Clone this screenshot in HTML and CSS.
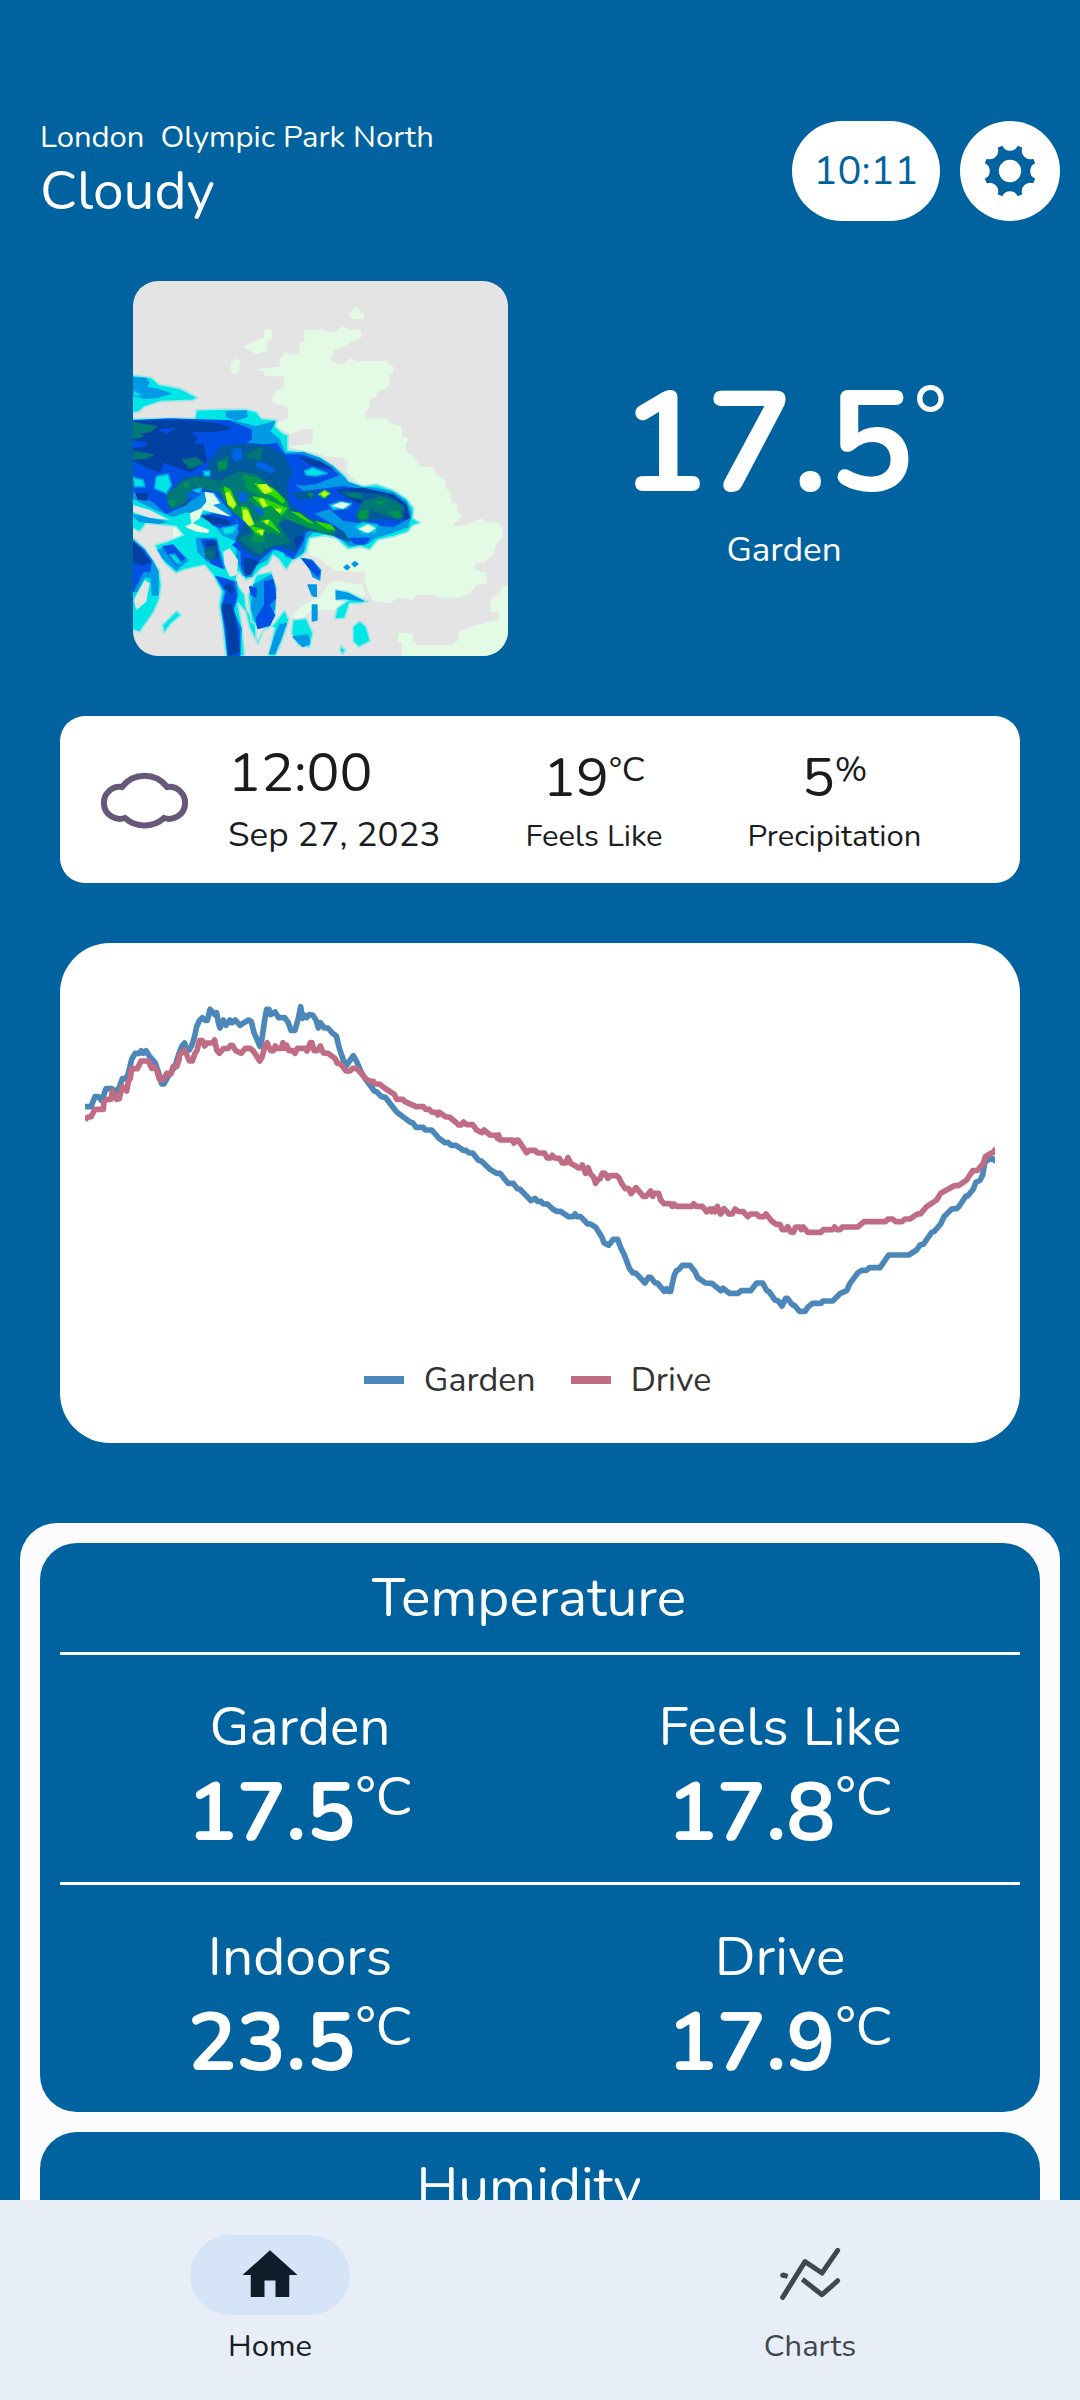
FILE: index.html
```html
<!DOCTYPE html>
<html lang="en">
<head>
<meta charset="utf-8">
<meta name="viewport" content="width=device-width, initial-scale=1">
<title>Weather</title>
<link rel="stylesheet" href="styles.css">
</head>
<body>
<div class="app">
<main class="content">
  <header class="header">
    <div class="place">
      <p class="place-name">London&nbsp; Olympic Park North</p>
      <h1 class="condition">Cloudy</h1>
    </div>
    <button class="pill-button" type="button">10:11</button>
    <button class="round-button" type="button" aria-label="Settings">
      <svg class="gear" viewBox="-80 -80 160 160" aria-hidden="true">
        <path fill-rule="evenodd" d="M22.8-74.6L36.6-68.9A25 25 0 0 0 68.9-36.6L74.6-22.8A25 25 0 0 0 74.6 22.8L68.9 36.6A25 25 0 0 0 36.6 68.9L22.8 74.6A25 25 0 0 0-22.8 74.6L-36.6 68.9A25 25 0 0 0-68.9 36.6L-74.6 22.8A25 25 0 0 0-74.6-22.8L-68.9-36.6A25 25 0 0 0-36.6-68.9L-22.8-74.6A25 25 0 0 0 22.8-74.6ZM33 0A33 33 0 1 0-33 0A33 33 0 1 0 33 0Z"/>
      </svg>
    </button>
  </header>

  <section class="hero">
    <svg class="radar" viewBox="10 18 1125 1125" role="img" aria-label="Rain radar">
      <rect x="10" y="18" width="1125" height="1125" fill="#e4e4e4"/>
      <g fill="#e3fbe4">
        <path d="M524 165L583 163 592 171 616 171 640 154 655 163 692 165 696 187 680 191 662 204 635 220 610 224 608 245 598 255 628 266 645 266 662 250 680 258 765 258 792 275 790 292 780 300 780 330 765 343 745 347 738 370 722 368 718 400 706 412 712 430 765 430 790 448 815 452 817 485 838 492 828 505 830 530 855 545 870 575 912 577 920 598 945 615 950 640 963 655 965 685 985 685 980 708 998 718 990 732 965 754 1000 753 1025 740 1055 731 1075 740 1108 745 1118 765 1118 785 1100 808 1090 840 1065 862 1038 865 1035 885 1070 893 1070 925 1040 930 1020 955 990 968 930 968 915 960 865 960 848 976 820 968 795 972 785 985 730 978 705 925 705 892 620 888 590 870 570 850 540 840 530 800 570 780 700 800 700 640 650 590 655 560 640 547 600 547 560 535 475 515 548 505 550 463 520 462 485 478 430 450 475 430 475 395 432 385 428 372 440 345 462 340 462 305 405 303 403 290 380 282 450 275 450 250 468 230 480 240 510 235 510 205 524 200Z"/>
        <path d="M680 95L705 120 700 133 668 131 658 118ZM405 163L425 163 428 190 414 198 412 228 380 238 342 215 380 195 402 190ZM322 250L330 260 328 288 320 298 305 292 303 265ZM598 925L620 918 700 930 706 960 650 1005 545 1005 520 1030 480 1028 520 990 570 965ZM1135 930L1118 935 1110 958 1085 970 1082 1010 1108 1012 1105 1035 1020 1055 1018 1062 988 1068 985 1095 970 1110 865 1110 850 1098 850 1075 805 1075 805 1098 817 1103 817 1143 1135 1143ZM130 755L330 650 340 800 240 860 180 870 130 830Z"/>
      </g>
      <g fill="#00e6e6" stroke="#99e6e6" stroke-width="5" stroke-linejoin="round">
        <path d="M5 300L65 307 88 328 150 340 205 368 190 376 90 380 45 395 28 410 5 415Z"/>
        <path d="M5 432L100 428 195 430 200 405 290 402 350 403 380 410 395 430 440 435 438 455 460 475 475 480 475 525 520 530 570 545 615 575 645 600 660 620 700 633 740 628 790 645 830 670 852 700 850 730 872 743 848 752 835 770 790 785 745 795 720 824 690 815 655 822 620 790 585 782 540 790 530 830 515 845 488 858 470 885 445 850 430 840 415 870 395 880 372 905 350 915 325 890 318 920 345 960 350 1000 378 1050 380 1100 400 1070 435 1045 465 1005 478 1035 460 1090 438 1143 415 1143 435 1060 415 1045 400 1070 385 1108 360 1060 348 1010 325 985 335 1040 345 1143 288 1143 278 1050 268 990 275 950 250 900 225 870 160 885 140 895 105 865 85 830 75 810 110 800 160 780 140 755 50 745 30 770 5 758Z"/>
        <path d="M5 785L45 818 70 858 88 885 95 930 88 975 70 1015 30 1072 5 1062ZM140 1008L155 1020 125 1045 103 1075 98 1050ZM617 945L655 950 715 980 690 985 660 985 645 1030 615 1032 622 1000 655 975 620 975ZM690 1038L710 1055 722 1098 688 1117 670 1100 670 1055ZM633 1112L648 1125 640 1138 630 1128ZM485 1075L490 1035 530 1030 550 1075 540 1118 505 1110ZM380 900L425 890 440 940 435 1030 400 1060 365 1040 355 960Z"/>
      </g>
      <g fill="#0099e6" stroke="#0099e6" stroke-width="4" stroke-linejoin="round">
        <path d="M10 308L50 310 58 322 50 338 80 342 122 356 80 368 40 370 10 352ZM290 410L350 408 352 425 320 435 290 425ZM10 436L300 436 380 455 435 440 420 470 450 495 465 535 520 532 570 550 610 575 640 605 655 622 700 638 740 640 790 652 830 680 845 715 835 755 780 775 735 788 715 805 660 812 620 780 550 770 530 790 520 830 495 850 470 845 455 820 430 825 410 855 380 870 365 905 340 900 320 850 325 800 280 780 245 735 210 720 170 710 130 725 70 700 10 670Z"/>
        <path d="M10 795L45 825 70 860 85 890 85 960 68 960 65 910 45 905 20 950 10 950ZM60 635L130 620 120 650 80 655ZM200 790L260 790 285 880 235 860 205 830ZM85 825L125 810 175 855 140 885 100 850ZM258 905L320 920 325 960 310 1010 335 1060 330 1143 295 1143 285 1060 275 1000 285 950ZM372 930L425 900 438 940 435 1000 420 1050 385 1060 365 1000ZM450 1050L470 1045 450 1100 435 1135 420 1135 435 1085ZM490 1085L535 1080 540 1105 520 1115ZM515 850L545 855 573 885 570 915 550 905 540 880ZM535 930L560 930 560 965 548 962ZM548 990L562 990 562 1035 548 1038ZM620 948L655 955 700 978 640 970 620 972ZM675 860L685 867 675 875 667 867ZM652 870L660 877 652 884 643 877ZM10 720L80 735 110 740 90 745 30 740Z"/>
      </g>
      <g fill="#0050e6" stroke="#0050e6" stroke-width="4" stroke-linejoin="round">
        <path d="M10 438L120 432 300 438 365 465 365 492 345 505 410 510 440 505 465 540 520 540 570 560 605 580 625 600 560 625 520 630 490 625 520 650 640 635 740 650 790 660 825 685 835 730 790 755 700 745 640 735 600 700 550 715 625 760 650 795 630 790 590 768 530 760 520 800 490 850 460 830 430 820 390 855 350 905 335 870 335 830 310 810 330 790 325 740 300 705 255 650 215 650 165 690 110 715 70 680 10 650Z"/>
        <path d="M10 800L40 825 65 860 60 890 40 890 10 950ZM100 815L130 810 165 850 140 870 120 845ZM215 795L255 795 280 880 245 865ZM220 715L310 725 320 745 290 765 250 750ZM262 905L312 920 320 965 310 1000 328 1060 330 1143 295 1143 288 1060 278 1000 290 950ZM405 920L430 915 438 970 418 990 435 1020 420 1050 385 1060 380 1030 405 990ZM520 852L550 860 570 890 565 905 540 880ZM660 790L720 790 705 808 675 806ZM360 935L380 940 378 965 365 960Z"/>
      </g>
      <g fill="#0040a0" stroke="#0040a0" stroke-width="4" stroke-linejoin="round">
        <path d="M10 440L150 438 260 445 305 460 260 468 180 470 200 490 190 505 220 510 230 560 180 590 100 560 90 590 60 580 10 555 10 520 50 515 50 500 10 495ZM515 548L570 560 605 580 540 568ZM10 800L35 825 60 860 40 870 10 860ZM210 720L290 735 300 750 250 745ZM230 800L260 800 265 850 235 850ZM300 925L312 945 305 955 285 935ZM278 988L305 990 320 1060 328 1130 300 1140 292 1060ZM20 655L55 655 50 675 25 672ZM440 730L490 740 520 790 500 820 470 810 440 790ZM345 850L385 860 360 900 345 890ZM625 645L700 640 790 660 830 690 840 730 800 735 740 710 640 660Z"/>
      </g>
      <path fill="#0050e6" d="M12 500L50 500 50 514 12 520ZM85 462L140 458 110 478ZM130 575L175 592 150 612 120 600Z"/>
      <g fill="#005a9c" stroke="#005a9c" stroke-width="4" stroke-linejoin="round">
        <path d="M275 515L330 508 420 515 460 540 485 590 470 630 480 690 540 730 600 750 640 770 660 800 620 780 540 765 490 790 500 830 440 810 380 850 340 820 320 790 350 740 300 690 260 640 180 640 170 690 115 700 120 655 160 610 230 600 240 560Z"/>
        <path d="M640 648L710 655 770 660 825 695 820 735 770 730 680 740 690 705 740 690 690 670 640 660ZM490 655L550 648 555 670 510 672ZM225 815L260 815 258 855 230 850Z"/>
      </g>
      <g fill="#007878" stroke="#007878" stroke-width="4" stroke-linejoin="round">
        <path d="M10 442L80 455 60 470 30 475 40 485 10 490ZM15 530L70 540 45 550 10 552ZM160 555L200 548 220 565 180 580ZM365 530L395 520 390 555 350 545ZM265 560L295 545 290 585 265 585ZM110 660L160 620 200 605 270 620 330 590 380 600 430 640 475 680 485 720 560 740 620 765 610 780 540 760 480 730 440 740 480 800 400 820 395 840 350 810 330 790 370 775 340 730 300 700 270 650 190 635 170 680 125 700Z"/>
        <path d="M700 680L750 665 800 680 820 700 810 730 770 720 720 700 715 735 690 735 680 720ZM650 655L690 655 700 670 670 668ZM225 830L250 830 245 850Z"/>
      </g>
      <g fill="#009650" stroke="#009650" stroke-width="3" stroke-linejoin="round">
        <path d="M340 600L385 610 430 650 470 680 480 715 610 765 600 775 530 755 460 725 440 755 455 780 400 765 405 800 365 800 380 760 335 730 300 700 270 640 300 640 330 700 360 740 400 740 380 690 350 670 400 670 350 640ZM160 625L180 625 172 640ZM690 710L715 705 710 730 690 732ZM780 710L805 708 818 725 795 728ZM735 680L768 678 755 690ZM535 655L550 655 545 668ZM115 680L140 678 130 695ZM265 565L290 560 285 580 270 582Z"/>
      </g>
      <g fill="#30d800" stroke="#30d800" stroke-width="3" stroke-linejoin="round">
        <path d="M283 635L302 645 320 690 312 702 296 690ZM335 695L355 700 372 745 360 752 340 735ZM375 625L430 640 465 675 460 685 425 660 395 652ZM370 665L400 670 470 700 455 718 425 690 400 698ZM485 710L510 715 550 745 535 740ZM560 740L605 750 615 765 590 760ZM565 658L585 645 602 655 585 670ZM395 738L420 735 450 772 425 755ZM360 752L405 765 398 783 375 772ZM430 695L472 700 455 720Z"/>
      </g>
      <g fill="#c4ff20" stroke="#c4ff20" stroke-width="3" stroke-linejoin="round">
        <path d="M288 655L298 652 318 688 310 698 296 688ZM340 705L352 705 372 748 358 752 342 732ZM385 630L410 628 428 648 405 656ZM388 672L400 672 412 692 400 695ZM574 657L585 650 596 656 583 664ZM438 703L455 702 450 713ZM405 738L418 735 412 748ZM382 768L400 765 398 780Z"/>
      </g>
      <g fill="#00e6e6" stroke="#00b0e6" stroke-width="5" stroke-linejoin="round">
        <path d="M525 588L550 578 592 595 560 603 530 600ZM10 608L40 615 45 635 15 635ZM80 605L115 598 125 630 110 655 75 640ZM222 590L240 588 240 602 225 602ZM675 755L700 742 745 750 738 772 700 778ZM600 690L630 680 665 685 650 700 610 703ZM190 645L215 640 210 655ZM120 840L135 838 155 865 140 865ZM195 710L230 690 250 712 215 720ZM275 760L325 750 310 775 285 780ZM10 345L38 358 20 365 10 360Z"/>
      </g>
      <g fill="#0064e6">
        <path d="M310 520L335 520 338 550 318 562 305 545ZM375 565L400 560 440 585 425 595 385 580ZM325 650L350 655 355 680 330 680ZM370 690L400 705 405 725 380 710ZM165 655L220 655 190 675Z"/>
        <path fill="#e3fbe4" d="M605 692L635 681 662 687 640 702ZM685 762L715 747 738 760 715 775ZM225 650L250 655 272 685 250 690 305 725 280 720 220 705 210 730 190 745 240 765 235 775 200 770 165 755 185 745 180 715 215 700 230 680Z"/>
        <path fill="#e4e4e4" d="M280 830L300 820 325 855 322 900 300 905 285 870ZM12 975L45 915 60 925 50 980 20 1005ZM10 690L60 705 120 735 60 728 10 712ZM40 400L120 382 200 392 195 425 45 428Z"/>
      </g>
    </svg>
    <div class="now">
      <p class="now-value"><strong>17.5</strong><span class="now-unit">°</span></p>
      <p class="now-label">Garden</p>
    </div>
  </section>

  <section class="forecast">
    <svg class="cloud" viewBox="99 772 90 58" aria-hidden="true">
      <path d="M121 787A28 28 0 0 1 166 787A16 16 0 1 1 163 818A29 29 0 0 1 124 818A16 16 0 1 1 121 787Z"/>
    </svg>
    <div class="when">
      <p class="when-time">12:00</p>
      <p class="when-date">Sep 27, 2023</p>
    </div>
    <div class="stat">
      <p class="stat-value">19<span class="stat-unit">°C</span></p>
      <p class="stat-label">Feels Like</p>
    </div>
    <div class="stat">
      <p class="stat-value">5<span class="stat-unit">%</span></p>
      <p class="stat-label">Precipitation</p>
    </div>
  </section>

  <section class="chart">
    <svg class="plot" viewBox="75 0 2730 1110" role="img" aria-label="Garden and drive temperature">
      <polyline class="line garden" points="75,410 93,410 105,380 115,380 125,392 138,356 155,356 168,365 178,352 187,326 198,326 205,310 215,268 226,250 238,250 244,242 250,250 258,242 268,258 285,278 295,305 305,342 312,342 325,318 345,290 357,250 366,228 374,219 380,238 388,240 396,225 404,198 410,170 418,152 427,143 435,151 442,151 450,118 458,126 464,134 470,128 475,158 480,174 490,150 498,166 510,150 516,158 526,150 540,166 552,158 566,150 574,155 582,188 600,229 606,205 614,150 620,118 627,118 632,134 645,126 656,143 674,143 685,158 693,181 705,181 715,145 722,110 727,145 733,135 740,143 748,134 758,135 768,150 775,174 781,158 793,174 804,174 818,190 829,198 838,235 850,270 859,287 880,257 890,275 903,305 915,325 943,363 950,365 964,380 976,382 1010,426 1030,441 1050,456 1058,458 1068,472 1090,472 1096,480 1115,480 1135,503 1155,518 1165,518 1174,526 1188,526 1210,541 1218,541 1227,549 1238,549 1255,571 1264,573 1290,598 1310,610 1320,610 1344,640 1360,640 1372,656 1380,658 1413,692 1425,685 1432,694 1442,694 1450,702 1462,702 1478,717 1490,724 1502,724 1525,740 1540,740 1545,732 1552,740 1562,740 1583,762 1592,762 1608,773 1625,800 1632,818 1646,826 1660,808 1673,808 1683,835 1692,852 1708,895 1718,908 1728,910 1755,939 1765,922 1773,923 1785,938 1793,940 1813,964 1820,956 1824,964 1832,964 1837,940 1843,915 1850,901 1856,899 1867,886 1890,886 1905,905 1913,923 1936,939 1955,940 1983,962 1989,955 2008,970 2035,970 2043,962 2072,962 2090,939 2108,939 2120,961 2128,966 2145,990 2155,993 2166,1008 2177,985 2182,985 2195,1002 2205,1008 2218,1024 2235,1024 2245,1010 2258,1000 2283,1000 2289,993 2318,993 2340,971 2360,962 2370,940 2393,909 2405,901 2420,901 2428,893 2460,893 2486,855 2546,855 2570,840 2580,825 2590,823 2615,787 2623,784 2642,762 2652,740 2675,717 2690,716 2698,708 2718,678 2723,678 2740,657 2748,636 2760,631 2768,615 2774,580 2782,570 2798,566 2808,575"/>
      <polyline class="line drive" points="75,450 83,442 93,440 105,418 130,418 132,395 140,388 153,388 157,363 163,378 170,388 178,386 186,350 200,363 205,335 211,325 215,296 232,296 243,273 265,273 275,295 282,290 290,300 298,328 310,328 320,310 333,312 340,288 350,290 357,270 358,255 374,240 388,273 397,273 405,250 411,242 418,212 427,212 434,228 440,219 458,219 464,210 470,240 478,250 490,236 505,235 512,226 518,227 527,242 543,250 556,235 570,235 580,243 599,273 606,262 615,228 621,218 632,242 640,242 646,228 652,235 664,235 669,218 675,235 680,226 687,242 698,242 705,250 712,235 735,235 741,243 751,218 756,218 762,242 773,242 781,228 790,249 804,250 826,266 832,280 842,282 858,303 870,303 878,295 890,295 918,327 930,334 940,334 945,342 958,342 978,357 1003,373 1010,388 1028,388 1035,395 1068,410 1090,410 1097,418 1108,418 1115,426 1130,428 1133,435 1138,427 1158,441 1168,441 1190,459 1195,465 1203,465 1211,456 1220,464 1238,464 1250,480 1266,488 1272,480 1290,495 1308,496 1312,505 1316,495 1320,510 1357,510 1362,519 1370,510 1375,511 1400,548 1408,541 1425,541 1432,549 1453,549 1462,564 1472,564 1477,556 1484,564 1498,565 1507,579 1517,579 1524,563 1532,580 1545,587 1555,594 1562,593 1567,585 1577,610 1584,593 1592,612 1600,620 1607,640 1615,627 1620,627 1627,609 1635,610 1644,625 1650,617 1670,617 1678,625 1685,640 1696,656 1706,656 1713,671 1728,653 1750,679 1758,679 1772,663 1778,679 1782,670 1796,670 1802,690 1812,701 1830,701 1837,709 1842,702 1850,709 1896,709 1901,701 1908,709 1927,709 1940,725 1950,717 1955,725 1960,717 1965,725 1972,709 1982,732 1992,716 2007,732 2017,732 2025,717 2035,724 2050,725 2063,740 2072,732 2090,732 2098,740 2112,740 2118,732 2135,753 2148,763 2160,763 2167,779 2177,779 2183,770 2192,786 2200,787 2207,771 2220,771 2224,779 2230,771 2243,787 2283,787 2290,779 2318,779 2324,771 2330,779 2340,779 2347,771 2393,771 2412,755 2476,755 2484,747 2498,747 2507,755 2526,755 2535,747 2550,747 2570,733 2582,731 2600,710 2630,690 2642,670 2683,647 2695,647 2720,630 2738,602 2753,601 2770,580 2776,560 2790,551 2800,547 2808,535"/>
    </svg>
    <ul class="legend">
      <li class="legend-item"><span class="swatch swatch-garden"></span>Garden</li>
      <li class="legend-item"><span class="swatch swatch-drive"></span>Drive</li>
    </ul>
  </section>

  <div class="panel">
    <section class="group">
      <h2 class="group-title">Temperature</h2>
      <div class="readings">
        <div class="reading"><p class="reading-label">Garden</p><p class="reading-value"><strong>17.5</strong><span class="reading-unit">°C</span></p></div>
        <div class="reading"><p class="reading-label">Feels Like</p><p class="reading-value"><strong>17.8</strong><span class="reading-unit">°C</span></p></div>
      </div>
      <div class="readings">
        <div class="reading"><p class="reading-label">Indoors</p><p class="reading-value"><strong>23.5</strong><span class="reading-unit">°C</span></p></div>
        <div class="reading"><p class="reading-label">Drive</p><p class="reading-value"><strong>17.9</strong><span class="reading-unit">°C</span></p></div>
      </div>
    </section>
    <section class="group">
      <h2 class="group-title">Humidity</h2>
    </section>
  </div>
</main>

<nav class="nav">
  <a class="nav-item active" href="#home">
    <span class="nav-icon"><svg viewBox="0 0 24 24" width="66" height="66" aria-hidden="true"><path fill="currentColor" d="M10 20v-6h4v6h5v-8h3L12 3 2 12h3v8z"/></svg></span>
    Home
  </a>
  <a class="nav-item" href="#charts">
    <span class="nav-icon"><svg viewBox="0 0 270 240" width="90" height="80" fill="none" stroke="currentColor" stroke-width="15" aria-hidden="true"><path stroke-linecap="round" stroke-linejoin="round" d="M53 187L120 80 171 114 218 46"/><path stroke-linejoin="round" d="M112 133L171 179 214 141"/><path stroke-linecap="round" d="M214 141L218 137M53 121L57 121"/><path d="M53 120L68 124"/></svg></span>
    Charts
  </a>
</nav>
</div>
</body>
</html>
```
FILE: styles.css
```css
* {
  box-sizing: border-box;
}

body,
h1,
h2,
p,
ul {
  margin: 0;
  padding: 0;
  font-weight: 400;
}

body {
  background: #0063a0;
  color: #fff;
  font-family: Nunito, Lato, "Open Sans", sans-serif;
}

button {
  border: 0;
  padding: 0;
  background: #fff;
  color: #0063a0;
  font: inherit;
}

.app {
  display: flex;
  flex-direction: column;
  height: 100vh;
}

.content {
  flex: 1;
  min-height: 0;
  overflow-y: auto;
  scrollbar-width: none;
}

/* Header */

.header {
  display: flex;
  gap: 20px;
  padding: 121px 20px 0 40px;
}

.place {
  flex: 1;
}

.place-name {
  margin-bottom: 6px;
  font-size: 31px;
  line-height: 32px;
}

.condition {
  font-size: 55px;
  line-height: 64px;
}

.pill-button {
  width: 148px;
  height: 100px;
  border-radius: 50px;
  font-size: 40px;
}

.round-button {
  display: grid;
  place-items: center;
  width: 100px;
  height: 100px;
  border-radius: 50%;
}

.gear {
  width: 54px;
  height: 54px;
  fill: currentColor;
}

/* Radar and current temperature */

.hero {
  display: grid;
  grid-template-columns: 1fr 1fr;
  place-items: center;
  margin-top: 58px;
  padding: 0 64px 0 88px;
}

.radar {
  width: 375px;
  height: 375px;
  border-radius: 25px;
}

.now {
  text-align: center;
}

.now-value {
  display: flex;
  font-size: 143px;
  line-height: 162px;
}

.now-unit {
  font-size: 90px;
  line-height: 116px;
}

.now-label {
  font-size: 35px;
  line-height: 50px;
}

/* Forecast card */

.forecast {
  display: flex;
  align-items: center;
  gap: 85px;
  min-height: 167px;
  margin: 60px 60px 0;
  padding: 7px 40px 0;
  border-radius: 25px;
  background: #fff;
  color: #1a1c1e;
}

.cloud {
  width: 90px;
  height: 58px;
  margin: 0 -47px 4px 0;
  fill: none;
  stroke: #67587a;
  stroke-width: 6px;
}

.when-time {
  font-size: 55px;
  line-height: 64px;
}

.when-date {
  font-size: 35px;
  line-height: 60px;
}

.stat {
  text-align: center;
}

.stat-value {
  display: flex;
  justify-content: center;
  font-size: 55px;
  line-height: 66px;
}

.stat-unit {
  font-size: 35px;
  line-height: 50px;
}

.stat-label {
  font-size: 31px;
  line-height: 50px;
}

/* Chart card */

.chart {
  margin: 60px 60px 0;
  padding: 27px 25px 43px;
  border-radius: 50px;
  background: #fff;
}

.plot {
  display: block;
  width: 100%;
}

.line {
  fill: none;
  stroke-width: 17px;
  stroke-linejoin: round;
}

.garden {
  stroke: #4b87b9;
}

.drive {
  stroke: #c06c84;
}

.legend {
  display: flex;
  justify-content: center;
  gap: 35px;
  margin-top: 20px;
  padding-right: 5px;
  color: #333;
  font-size: 34px;
  line-height: 40px;
  list-style: none;
}

.legend-item {
  display: flex;
  align-items: center;
  gap: 20px;
}

.swatch {
  width: 40px;
  height: 8px;
}

.swatch-garden {
  background: #4b87b9;
}

.swatch-drive {
  background: #c06c84;
}

/* Readings */

.panel {
  display: grid;
  gap: 20px;
  margin: 80px 20px 0;
  padding: 20px;
  border-radius: 37px;
  background: #fcfcff;
}

.group {
  padding: 0 20px;
  border-radius: 37px;
  background: #0063a0;
}

.group-title {
  padding-right: 22px;
  font-size: 55px;
  line-height: 109px;
  text-align: center;
}

.readings {
  display: grid;
  grid-template-columns: 1fr 1fr;
  padding: 40px 0 15px;
  border-top: 3px solid #fff;
}

.reading {
  text-align: center;
}

.reading-label {
  font-size: 55px;
  line-height: 64px;
}

.reading-value {
  display: flex;
  justify-content: center;
  font-size: 82px;
  line-height: 108px;
}

.reading-unit {
  font-size: 55px;
  line-height: 76px;
}

/* Bottom navigation */

.nav {
  display: flex;
  min-height: 200px;
  padding-top: 35px;
  background: #e8eef7;
}

.nav-item {
  display: flex;
  flex: 1;
  flex-direction: column;
  align-items: center;
  gap: 11px;
  color: #42474e;
  font-size: 31px;
  line-height: 40px;
  text-decoration: none;
}

.nav-icon {
  display: grid;
  place-items: center;
  width: 160px;
  height: 80px;
  border-radius: 40px;
}

.active {
  color: #1a1c1e;
}

.active .nav-icon {
  background: #d6e4f7;
  color: #0f1d2a;
}
```
